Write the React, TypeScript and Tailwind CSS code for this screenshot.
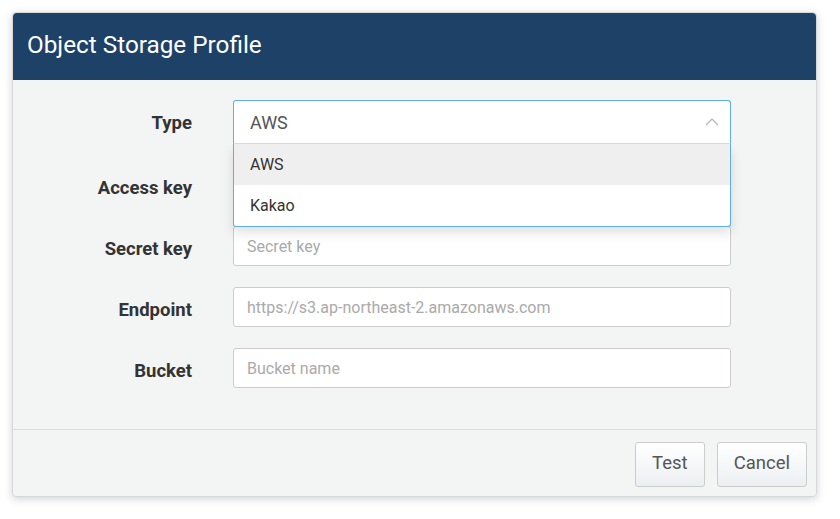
import React from "react";

const fields = [
  { label: "Secret key", placeholder: "Secret key" },
  { label: "Endpoint", placeholder: "https://s3.ap-northeast-2.amazonaws.com" },
  { label: "Bucket", placeholder: "Bucket name" },
];

export default function App() {
  return (
    <div className="min-h-screen bg-white p-3" style={{ fontFamily: "Roboto, 'Liberation Sans', sans-serif" }}>
      <div className="w-[805px] h-[485px] flex flex-col rounded-[4px] border border-[#d6d8da] bg-[#f3f4f4] shadow-[0_2px_8px_rgba(0,0,0,0.18)] overflow-visible">
        <div className="h-[67px] shrink-0 flex items-center px-[14px] pb-[2px] bg-[#1e4168] rounded-t-[4px]">
          <h1 className="text-[24.3px] text-white font-normal">Object Storage Profile</h1>
        </div>

        <div className="flex-1 pt-[20px]">
          <div className="grid grid-cols-[179px_498px] gap-x-[41px] items-center">
            <label className="text-right text-[18.5px] font-bold text-[#333] pt-[3px]">Type</label>
            <div className="relative">
              <div className="h-[44px] flex items-center justify-between pl-[16px] pr-[10px] bg-white border border-[#5eaeea] border-b-[#dddddd] rounded-t-[3px]">
                <span className="text-[18px] text-[#555]">AWS</span>
                <svg width="16" height="10" viewBox="0 0 16 10" fill="none" stroke="#b5b5b5" strokeWidth="1.2">
                  <polyline points="2,8 8,2 14,8" />
                </svg>
              </div>
              <div className="absolute left-0 right-0 top-full z-10 bg-white border border-t-0 border-[#5eaeea] rounded-b-[3px] shadow-[0_6px_12px_rgba(0,0,0,0.12)]">
                <div className="h-[41px] flex items-center px-[16px] bg-[#efefef] text-[16px] text-[#333]">AWS</div>
                <div className="h-[41px] flex items-center px-[16px] text-[16px] text-[#333]">Kakao</div>
              </div>
            </div>

            <label className="text-right text-[18.5px] font-bold text-[#333] mt-[21px] pt-[8px]">Access key</label>
            <input
              className="mt-[21px] h-[40px] px-[13px] bg-white border border-[#cccccc] rounded-[3px] text-[16px] outline-none placeholder:text-[#aaa]"
              placeholder="Access key"
            />

            {fields.map((f) => (
              <React.Fragment key={f.label}>
                <label className="text-right text-[18.5px] font-bold text-[#333] mt-[21px] pt-[8px]">{f.label}</label>
                <input
                  className="mt-[21px] h-[40px] px-[13px] bg-white border border-[#cccccc] rounded-[3px] text-[16px] outline-none placeholder:text-[#aaa]"
                  placeholder={f.placeholder}
                />
              </React.Fragment>
            ))}
          </div>
        </div>

        <div className="h-[67px] shrink-0 flex items-center justify-end gap-[12px] pr-[9px] pt-[2px] border-t border-[#dddddd]">
          <button className="h-[45px] px-[16px] text-[18.5px] text-[#555] border border-[#cccccc] rounded-[3px] bg-gradient-to-b from-white to-[#eceff2]">
            Test
          </button>
          <button className="h-[45px] px-[16px] text-[18.5px] text-[#555] border border-[#cccccc] rounded-[3px] bg-gradient-to-b from-white to-[#eceff2]">
            Cancel
          </button>
        </div>
      </div>
    </div>
  );
}
